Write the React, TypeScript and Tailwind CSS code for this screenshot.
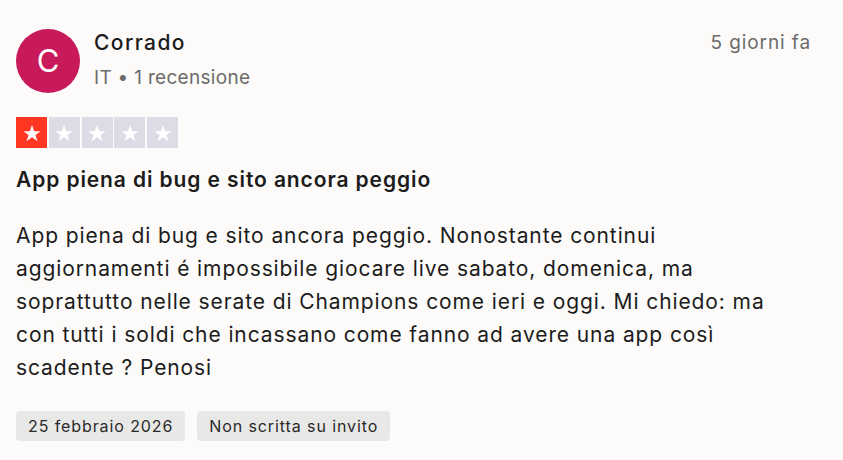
import React from "react";

function Star({ fill }: { fill: string }) {
  return (
    <div className={`w-[31px] h-[31px] flex items-center justify-center ${fill}`}>
      <svg width="20" height="20" viewBox="0 0 24 24">
        <path
          d="M12 2.5l2.6 7.3h7.7l-6.2 4.6 2.4 7.4L12 17.2l-6.5 4.6 2.4-7.4-6.2-4.6h7.7z"
          fill="#ffffff"
        />
      </svg>
    </div>
  );
}

export default function App() {
  return (
    <div
      className="w-[843px] h-[460px] bg-[#fcfbf9] px-4 pt-[29px] text-[#1c1c1c]"
      style={{ fontFamily: "Inter, 'Noto Sans', sans-serif" }}
    >
      <div className="flex items-start justify-between pr-[16px]">
        <div className="flex items-start gap-[14px]">
          <div className="w-16 h-16 rounded-full bg-[#c81a5a] flex items-center justify-center text-white text-[31px] font-normal">
            C
          </div>
          <div className="flex flex-col">
            <div className="text-[21px] font-medium leading-[28px] tracking-[1.4px] text-[#1c1c1c]">Corrado</div>
            <div className="text-[19px] leading-[26px] mt-[8px] tracking-[0.3px] text-[#6b6b6b]">IT • 1 recensione</div>
          </div>
        </div>
        <div className="text-[19px] leading-[28px] tracking-[0.9px] text-[#6b6b6b]">5 giorni fa</div>
      </div>

      <div className="flex gap-[1.75px] mt-[24px]">
        <Star fill="bg-[#ff3722]" />
        <Star fill="bg-[#dcdce6]" />
        <Star fill="bg-[#dcdce6]" />
        <Star fill="bg-[#dcdce6]" />
        <Star fill="bg-[#dcdce6]" />
      </div>

      <div className="text-[21px] font-semibold leading-[28px] tracking-[0.9px] mt-[18px]">
        App piena di bug e sito ancora peggio
      </div>

      <p className="text-[21px] leading-[33px] tracking-[0.9px] mt-[25px] whitespace-nowrap">
        App piena di bug e sito ancora peggio. Nonostante continui
        <br />
        aggiornamenti é impossibile giocare live sabato, domenica, ma
        <br />
        soprattutto nelle serate di Champions come ieri e oggi. Mi chiedo: ma
        <br />
        con tutti i soldi che incassano come fanno ad avere una app così
        <br />
        scadente ? Penosi
      </p>

      <div className="flex gap-3 mt-[27px]">
        <div className="h-[30px] px-3 rounded-[4px] bg-[#e8e8e6] flex items-center text-[16px] tracking-[0.9px] text-[#2a2a2a]">
          25 febbraio 2026
        </div>
        <div className="h-[30px] px-3 rounded-[4px] bg-[#e8e8e6] flex items-center text-[16px] tracking-[0.9px] text-[#2a2a2a]">
          Non scritta su invito
        </div>
      </div>
    </div>
  );
}
